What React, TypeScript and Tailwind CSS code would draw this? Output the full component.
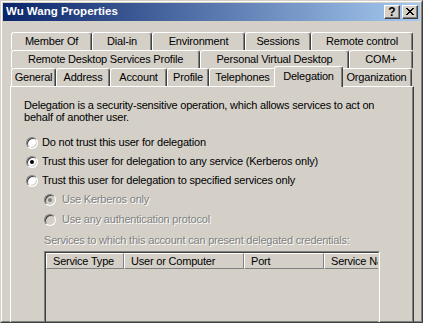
import React from "react";

const font = { fontFamily: '"Liberation Sans", Arial, sans-serif' };

function Tab({ label, w, selected }: { label: string; w: number; selected?: boolean }) {
  return (
    <div
      style={{ width: w }}
      className={
        "shrink-0 flex items-center justify-center border-l border-t border-r border-l-white border-t-white border-r-[#404040] rounded-t-[3px] shadow-[inset_-1px_0_0_#808080] bg-[#d4d0c8] text-black " +
        (selected ? "h-[21px] -mx-[2px] -mb-[1px] relative z-10 pb-[2px]" : "h-[18px]")
      }
    >
      <span className="whitespace-nowrap leading-none">{label}</span>
    </div>
  );
}

function Radio({ checked, disabled }: { checked?: boolean; disabled?: boolean }) {
  return (
    <div
      className={
        "w-[12px] h-[12px] rounded-full border border-t-[#808080] border-l-[#808080] border-r-white border-b-white shadow-[inset_1px_1px_0_#404040,inset_-1px_-1px_0_#d4d0c8] flex items-center justify-center shrink-0 " +
        (disabled ? "bg-[#d4d0c8]" : "bg-white")
      }
    >
      {checked && (
        <div className={"w-[4px] h-[4px] rounded-full " + (disabled ? "bg-[#808080]" : "bg-black")} />
      )}
    </div>
  );
}

const dis = "text-[#808080] [text-shadow:1px_1px_0_#ffffff]";

export default function App() {
  return (
    <div
      style={font}
      className="w-[423px] h-[323px] overflow-hidden bg-[#d4d0c8] text-[11px] text-black border border-t-[#d4d0c8] border-l-[#d4d0c8] border-r-[#404040] border-b-[#404040]"
    >
      <div className="h-full border border-t-white border-l-white border-r-[#808080] border-b-[#808080] p-[1px] flex flex-col">
        {/* Title bar */}
        <div className="h-[18px] shrink-0 flex items-center bg-[linear-gradient(to_right,#0a246a,#a6caf0)] pl-[3px] pr-[2px]">
          <span className="text-white font-bold text-[11.5px] leading-none">Wu Wang Properties</span>
          <div className="ml-auto flex items-center gap-[2px]">
            <div className="w-[16px] h-[14px] bg-[#d4d0c8] border border-t-white border-l-white border-r-[#404040] border-b-[#404040] shadow-[inset_-1px_-1px_0_#808080] flex items-center justify-center">
              <span className="font-bold text-[12px] leading-none text-black">?</span>
            </div>
            <div className="w-[16px] h-[14px] bg-[#d4d0c8] border border-t-white border-l-white border-r-[#404040] border-b-[#404040] shadow-[inset_-1px_-1px_0_#808080] flex items-center justify-center">
              <svg width="10" height="9" viewBox="0 0 10 9" shapeRendering="crispEdges">
                <path d="M1 0h2v1h1v1h2V1h1V0h2v1H8v1H7v1H6v1h1v1h1v1h1v1H7V6H6V5H4v1H3v1H1V6h1V5h1V4h1V3H3V2H2V1H1z" fill="#000" />
              </svg>
            </div>
          </div>
        </div>

        <div className="tracking-[-0.2px] flex flex-col flex-1">
          {/* Tabs */}
          <div className="mt-[11px] flex flex-col">
            <div className="flex ml-[8px]">
              <Tab label="Member Of" w={81} />
              <Tab label="Dial-in" w={60} />
              <Tab label="Environment" w={93} />
              <Tab label="Sessions" w={66} />
              <Tab label="Remote control" w={102} />
            </div>
            <div className="flex ml-[8px]">
              <Tab label="Remote Desktop Services Profile" w={189} />
              <Tab label="Personal Virtual Desktop" w={149} />
              <Tab label="COM+" w={64} />
            </div>
            <div className="flex items-end ml-[8px] -mt-[3px]">
              <div className="flex items-end h-[21px]">
                <Tab label="General" w={45} />
                <Tab label="Address" w={54} />
                <Tab label="Account" w={57} />
                <Tab label="Profile" w={42} />
                <Tab label="Telephones" w={67} />
                <Tab label="Delegation" w={69} selected />
                <Tab label="Organization" w={71} />
              </div>
            </div>
          </div>

          {/* Panel */}
          <div className="ml-[7px] w-[404px] flex-1 border border-t-white border-l-white border-r-[#404040] border-b-0 shadow-[inset_-1px_0_0_#808080] pl-[13px] pt-[12px]">
            <p className="leading-[12px]">
              Delegation is a security-sensitive operation, which allows services to act on
              <br />
              behalf of another user.
            </p>

            <div className="mt-[10px] flex flex-col">
              <div className="h-[19px] flex items-center pl-[2px] gap-[4px]">
                <Radio />
                <span>Do not trust this user for delegation</span>
              </div>
              <div className="h-[19px] flex items-center pl-[2px] gap-[4px]">
                <Radio checked />
                <span>Trust this user for delegation to any service (Kerberos only)</span>
              </div>
              <div className="h-[19px] flex items-center pl-[2px] gap-[4px]">
                <Radio />
                <span>Trust this user for delegation to specified services only</span>
              </div>
              <div className="h-[19px] flex items-center pl-[20px] gap-[6px]">
                <Radio checked disabled />
                <span className={dis}>Use Kerberos only</span>
              </div>
              <div className="h-[19px] mt-[1px] flex items-center pl-[20px] gap-[6px]">
                <Radio disabled />
                <span className={dis}>Use any authentication protocol</span>
              </div>
            </div>

            <div className={"mt-[5px] h-[13px] leading-[13px] pl-[20px] " + dis}>
              Services to which this account can present delegated credentials:
            </div>

            <div className="mt-[4px] ml-[20px] w-[336px] h-[100px] border border-t-[#808080] border-l-[#808080] border-r-white border-b-white">
              <div className="h-full border border-t-[#404040] border-l-[#404040] border-r-[#d4d0c8] border-b-[#d4d0c8] overflow-hidden">
                <div className="flex h-[16px]">
                  {[
                    ["Service Type", 78],
                    ["User or Computer", 120],
                    ["Port", 80],
                    ["Service Name", 80],
                  ].map(([t, w]) => (
                    <div
                      key={t as string}
                      style={{ width: w as number }}
                      className="shrink-0 h-[16px] border-l border-t border-r border-b border-l-white border-t-white border-r-[#808080] border-b-[#808080] flex items-center pl-[6px] whitespace-nowrap overflow-hidden"
                    >
                      {t}
                    </div>
                  ))}
                </div>
              </div>
            </div>
          </div>
        </div>
      </div>
    </div>
  );
}
